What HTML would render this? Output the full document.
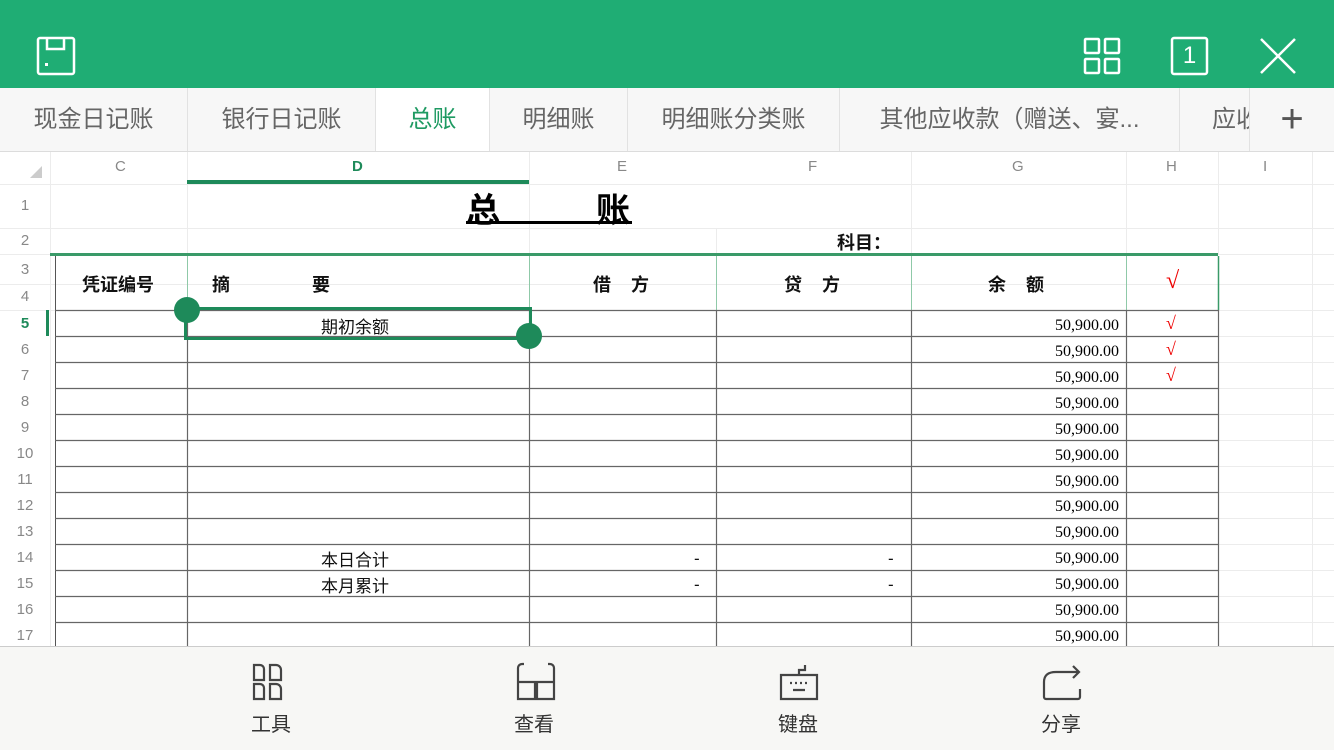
<!DOCTYPE html>
<html><head><meta charset="utf-8"><style>
*{margin:0;padding:0;box-sizing:border-box}
body{width:1334px;height:750px;overflow:hidden;background:#fff;font-family:"Liberation Sans","Noto Sans CJK SC",sans-serif;position:relative}
.a{position:absolute;white-space:nowrap}
.top{left:0;top:0;width:1334px;height:88px;background:#1fad74}
.tabs{left:0;top:88px;width:1334px;height:64px;background:#f7f7f7;border-bottom:1px solid #dcdcdc}
.tab{position:absolute;top:0;height:63px;line-height:64px;font-size:24px;color:#666;text-align:center;border-right:1px solid #e2e2e2}
.ch{font-size:15px;color:#888;top:158px}
.rh{font-size:15px;color:#888;left:0;width:50px;text-align:center}
.b{font-weight:bold;font-size:18px;color:#111}
.n{font-family:"Liberation Serif",serif;font-size:16px;color:#000;right:215px}
.ck{font-family:"Liberation Serif",serif;color:#e00;font-size:18px;left:1166px}
.t{font-size:17px;color:#111}
.bot{left:0;top:646px;width:1334px;height:104px;background:#f7f7f5;border-top:1px solid #ccc}
.lb{font-size:20px;color:#333;top:708px}
</style></head><body>
<div class="a top"></div>
<svg class="a" style="left:0;top:0" width="1334" height="88" fill="none" stroke="#fff" stroke-width="2.5">
<rect x="38" y="38" width="36" height="36" rx="2"/><path d="M47 38v11h17V38"/><rect x="45" y="63" width="3" height="3" fill="#fff" stroke="none"/>
<rect x="1085" y="39" width="14" height="14" rx="1"/><rect x="1105" y="39" width="14" height="14" rx="1"/><rect x="1085" y="59" width="14" height="14" rx="1"/><rect x="1105" y="59" width="14" height="14" rx="1"/>
<rect x="1172" y="38" width="35" height="36" rx="2"/>
<path d="M1261 39L1295 73M1295 39L1261 73"/>
</svg>
<div class="a" style="left:1172px;top:39px;width:35px;text-align:center;color:#fff;font-size:24px;line-height:34px">1</div>
<div class="a tabs">
<div class="tab" style="left:0;width:188px">现金日记账</div>
<div class="tab" style="left:188px;width:188px">银行日记账</div>
<div class="tab" style="left:376px;width:114px;background:#fff;color:#1e9a62">总账</div>
<div class="tab" style="left:490px;width:138px">明细账</div>
<div class="tab" style="left:628px;width:212px">明细账分类账</div>
<div class="tab" style="left:840px;width:340px">其他应收款（赠送、宴...</div>
<div class="tab" style="left:1180px;width:70px;overflow:hidden;text-align:left;padding-left:32px">应收</div>
<div class="tab" style="left:1250px;width:84px;border:none;font-size:40px;font-weight:300;color:#555;line-height:62px">+</div>
</div>
<svg class="a" style="left:0;top:152px" width="1334" height="494">
<g stroke="#ececec" stroke-width="1">
<path d="M0 32.5H1334M0 76.5H1334M0 102.5H1334M0 132.5H1334M0 158.5H1334"/>
<path d="M1218 184.5H1334M1218 210.5H1334M1218 236.5H1334M1218 262.5H1334M1218 288.5H1334M1218 314.5H1334M1218 340.5H1334M1218 366.5H1334M1218 392.5H1334M1218 418.5H1334M1218 444.5H1334M1218 470.5H1334"/>
<path d="M50.5 0V494M187.5 0V102M529.5 0V102M716.5 76V102M911.5 0V102M1126.5 0V102M1218.5 0V102M1312.5 0V494"/>
</g>
<path d="M30 26L42 14V26Z" fill="#ccc"/>
<rect x="187" y="28" width="342" height="4" fill="#1e8a5a"/>
<rect x="50" y="101" width="1168" height="3" fill="#3a9a68"/>
<g stroke="#8fc9a8" stroke-width="1"><path d="M187.5 104V158M529.5 104V158M716.5 104V158M911.5 104V158M1126.5 104V158"/></g>
<path d="M1218.5 104V158" stroke="#3a9a68" stroke-width="1.5"/>
<path d="M55.5 104V494" stroke="#555"/>
<g stroke="#666" stroke-width="1.2">
<path d="M55 158.5H1218M55 184.5H1218M55 210.5H1218M55 236.5H1218M55 262.5H1218M55 288.5H1218M55 314.5H1218M55 340.5H1218M55 366.5H1218M55 392.5H1218M55 418.5H1218M55 444.5H1218M55 470.5H1218"/>
<path d="M187.5 158V494M529.5 158V494M716.5 158V494M911.5 158V494M1126.5 158V494M1218.5 158V494"/>
</g>
<rect x="46" y="158" width="3" height="26" fill="#1e8a5a"/>
<rect x="185.5" y="156.5" width="345" height="30" fill="none" stroke="#1e8a5a" stroke-width="3"/>
<circle cx="187" cy="158" r="13" fill="#1e8a5a"/><circle cx="529" cy="184" r="13" fill="#1e8a5a"/>
</svg>
<div class="a ch" style="left:115px">C</div><div class="a ch" style="left:352px;color:#1e8a5a;font-weight:bold">D</div><div class="a ch" style="left:617px">E</div><div class="a ch" style="left:808px">F</div><div class="a ch" style="left:1012px">G</div><div class="a ch" style="left:1166px">H</div><div class="a ch" style="left:1263px">I</div>
<div class="a rh" style="top:197px">1</div><div class="a rh" style="top:232px">2</div><div class="a rh" style="top:261px">3</div><div class="a rh" style="top:288px">4</div><div class="a rh" style="top:315px;color:#1e8a5a;font-weight:bold">5</div><div class="a rh" style="top:341px">6</div><div class="a rh" style="top:367px">7</div><div class="a rh" style="top:393px">8</div><div class="a rh" style="top:419px">9</div><div class="a rh" style="top:445px">10</div><div class="a rh" style="top:471px">11</div><div class="a rh" style="top:497px">12</div><div class="a rh" style="top:523px">13</div><div class="a rh" style="top:549px">14</div><div class="a rh" style="top:575px">15</div><div class="a rh" style="top:601px">16</div><div class="a rh" style="top:627px">17</div>
<div class="a" style="left:466px;top:184px;width:166px;height:40px;border-bottom:3px solid #000"></div>
<div class="a" style="left:466px;top:183px;font-size:34px;font-weight:bold;color:#000">总</div>
<div class="a" style="left:596px;top:183px;font-size:34px;font-weight:bold;color:#000">账</div>
<div class="a b" style="left:837px;top:229px">科目：</div>
<div class="a b" style="left:82px;top:271px">凭证编号</div>
<div class="a b" style="left:212px;top:271px">摘</div><div class="a b" style="left:312px;top:271px">要</div>
<div class="a b" style="left:593px;top:271px">借&nbsp;&nbsp;&nbsp;&nbsp;方</div>
<div class="a b" style="left:784px;top:271px">贷&nbsp;&nbsp;&nbsp;&nbsp;方</div>
<div class="a b" style="left:988px;top:271px">余&nbsp;&nbsp;&nbsp;&nbsp;额</div>
<div class="a ck" style="top:268px;font-size:24px">√</div>
<div class="a t" style="left:321px;top:313px">期初余额</div>
<div class="a t" style="left:321px;top:546px">本日合计</div>
<div class="a t" style="left:321px;top:572px">本月累计</div>
<div class="a t" style="left:694px;top:549px">-</div><div class="a t" style="left:888px;top:549px">-</div>
<div class="a t" style="left:694px;top:575px">-</div><div class="a t" style="left:888px;top:575px">-</div>
<div class="a ck" style="top:313px">√</div><div class="a ck" style="top:339px">√</div><div class="a ck" style="top:365px">√</div>
<div class="a n" style="top:317px">50,900.00</div><div class="a n" style="top:343px">50,900.00</div><div class="a n" style="top:369px">50,900.00</div><div class="a n" style="top:395px">50,900.00</div><div class="a n" style="top:421px">50,900.00</div><div class="a n" style="top:447px">50,900.00</div><div class="a n" style="top:473px">50,900.00</div><div class="a n" style="top:498px">50,900.00</div><div class="a n" style="top:524px">50,900.00</div><div class="a n" style="top:550px">50,900.00</div><div class="a n" style="top:576px">50,900.00</div><div class="a n" style="top:602px">50,900.00</div><div class="a n" style="top:628px">50,900.00</div>
<div class="a bot"></div>
<svg class="a" style="left:0;top:646px" width="1334" height="60" fill="none" stroke="#444" stroke-width="2.2">
<path d="M254 19h6a4 4 0 0 1 4 4v11h-10zM270 19h6a5 5 0 0 1 5 5v10h-11zM254 38h6a4 4 0 0 1 4 4v11h-10zM270 38h6a5 5 0 0 1 5 5v10h-11z"/>
<path d="M524 18h-2a4 4 0 0 0-4 4v31h17V36h-17M548 18h2a4 4 0 0 1 4 4v31h-17V36h17"/>
<path d="M781 29h36v24h-36zM799 29v-5h6v-5"/><path d="M790 37h2M795 37h2M800 37h2M805 37h2M793 44h12"/>
<path d="M1044 36v15a2 2 0 0 0 2 2h32a2 2 0 0 0 2-2v-8M1044 36q0-10 12-10h22M1073 20l6 6-6 6"/>
</svg>
<div class="a lb" style="left:251px">工具</div><div class="a lb" style="left:514px">查看</div><div class="a lb" style="left:778px">键盘</div><div class="a lb" style="left:1041px">分享</div>
</body></html>
